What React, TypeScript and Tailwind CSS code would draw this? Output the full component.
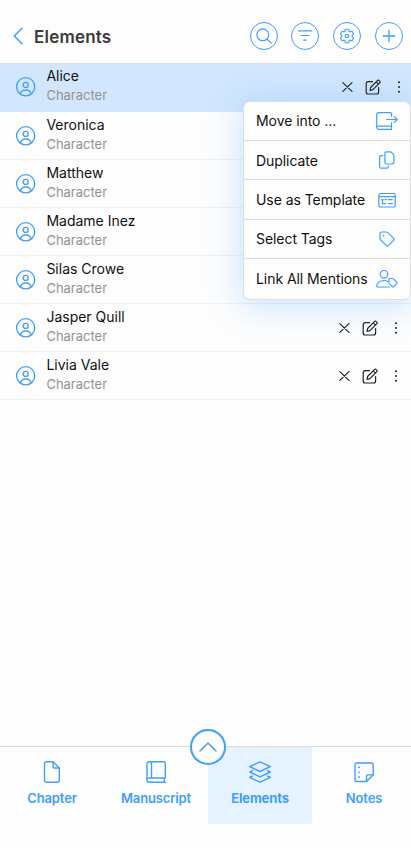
import React from 'react';

interface IconProps {
  className?: string;
  children: React.ReactNode;
  viewBox: string;
  strokeWidth?: number;
}

interface ElementItem {
  id: number;
  name: string;
  type: string;
}

const elements: ElementItem[] = [
  { id: 1, name: 'Alice', type: 'Character' },
  { id: 2, name: 'Veronica', type: 'Character' },
  { id: 3, name: 'Matthew', type: 'Character' },
  { id: 4, name: 'Madame Inez', type: 'Character' },
  { id: 5, name: 'Silas Crowe', type: 'Character' },
  { id: 6, name: 'Jasper Quill', type: 'Character' },
  { id: 7, name: 'Livia Vale', type: 'Character' },
];

function Icon({ className = '', children, viewBox, strokeWidth = 1.2 }: IconProps) {
  return (
    <svg
      className={`shrink-0 ${className}`}
      viewBox={viewBox}
      fill="none"
      stroke="currentColor"
      strokeWidth={strokeWidth}
      strokeLinecap="round"
      strokeLinejoin="round"
    >
      {children}
    </svg>
  );
}

const UserIcon = () => (
  <Icon viewBox="0 0 20 20" className="h-5 w-5" strokeWidth={1.3}>
    <circle cx="9.7" cy="9.8" r="9.1" />
    <circle cx="9.7" cy="7.9" r="2.5" />
    <path d="M4.3 17c.5-2.500 2.500-4 5.400-4s4.900 1.500 5.400 4" />
  </Icon>
);

const SearchIcon = () => (
  <Icon viewBox="0 0 16 16" className="h-4 w-4">
    <circle cx="6.8" cy="6.8" r="5.9" />
    <path d="M11 11l4.2 4.2" />
  </Icon>
);

const FilterIcon = () => (
  <Icon viewBox="0 0 16 16" className="h-4 w-4">
    <path d="M1.500 2.800h13M4 7.500h8M6.800 12.200h2.400" />
  </Icon>
);

const GearIcon = () => (
  <Icon viewBox="0 0 24 24" className="h-[18px] w-[18px]" strokeWidth={1.6}>
    <path d="M9.594 3.940c.090-.542.560-.940 1.110-.940h2.593c.550 0 1.020.398 1.110.940l.213 1.281c.063.374.313.686.645.870.074.040.147.083.220.127.325.196.720.257 1.075.124l1.217-.456a1.125 1.125 0 0 1 1.370.490l1.296 2.247a1.125 1.125 0 0 1-.260 1.431l-1.003.827c-.293.241-.438.613-.430.992a7.723 7.723 0 0 1 0 .255c-.008.378.137.750.430.991l1.004.827c.424.350.534.955.260 1.430l-1.298 2.247a1.125 1.125 0 0 1-1.369.491l-1.217-.456c-.355-.133-.750-.072-1.076.124a6.470 6.470 0 0 1-.220.128c-.331.183-.581.495-.644.869l-.213 1.281c-.090.543-.560.940-1.110.940h-2.594c-.550 0-1.019-.398-1.110-.940l-.213-1.281c-.062-.374-.312-.686-.644-.870a6.520 6.520 0 0 1-.220-.127c-.325-.196-.720-.257-1.076-.124l-1.217.456a1.125 1.125 0 0 1-1.369-.490l-1.297-2.247a1.125 1.125 0 0 1 .260-1.431l1.004-.827c.292-.240.437-.613.430-.991a6.932 6.932 0 0 1 0-.255c.007-.380-.138-.751-.430-.992l-1.004-.827a1.125 1.125 0 0 1-.260-1.430l1.297-2.247a1.125 1.125 0 0 1 1.370-.491l1.216.456c.356.133.751.072 1.076-.124.072-.044.146-.086.220-.128.332-.183.582-.495.644-.869l.214-1.280Z" />
    <circle cx="12" cy="12" r="2.3" />
  </Icon>
);

const PlusIcon = () => (
  <Icon viewBox="0 0 16 16" className="h-4 w-4" strokeWidth={1.3}>
    <path d="M8 2.200v11.600M2.200 8h11.600" />
  </Icon>
);

const MoveIcon = () => (
  <Icon viewBox="0 0 22 18" className="h-[18px] w-[22px]">
    <path d="M15.500 4.300V1.700a1 1 0 0 0-1-1H2.700a2 2 0 0 0-2 2v12.900M15.500 10.700v3.500H2.400a1.550 1.550 0 0 0 0 3.100h13.100v-3" />
    <path d="M10.500 7.500h10.800M18.300 4.600l3 2.900-3 2.900" />
  </Icon>
);

const DuplicateIcon = () => (
  <Icon viewBox="0 0 18 18" className="mr-[2px] h-[18px] w-[18px]">
    <path d="M8.700.8h4.200l3 3v7.400a1.800 1.800 0 0 1-1.800 1.800H8.700a1.800 1.800 0 0 1-1.800-1.800V2.600A1.800 1.800 0 0 1 8.700.8Z" />
    <path d="M4.700 4.700H3.400a1.800 1.800 0 0 0-1.800 1.800v8.900a1.800 1.800 0 0 0 1.800 1.800h5.200a1.800 1.800 0 0 0 1.800-1.800V15" />
  </Icon>
);

const TemplateIcon = () => (
  <Icon viewBox="0 0 18 16" className="mr-[2px] h-4 w-[18px]">
    <rect x=".8" y="1.500" width="16.400" height="13.500" rx="1.600" />
    <path d="M1 4.700h16M3.700 7.700h1.500M4.500 7.700v4M7 7.700h1.500M4.500 11.700h3M10.500 7.700h3.800M10.500 11.700h3.800" />
  </Icon>
);

const TagIcon = () => (
  <Icon viewBox="0 0 16 16" className="mr-[3px] h-4 w-4">
    <path d="M1 2.700A1.700 1.700 0 0 1 2.700 1h4.700a2 2 0 0 1 1.400.6l5.600 5.600a1.700 1.700 0 0 1 0 2.400l-4.800 4.800a1.700 1.700 0 0 1-2.400 0L1.600 8.800A2 2 0 0 1 1 7.400Z" />
    <circle cx="4.500" cy="4.500" r=".3" />
  </Icon>
);

const MentionIcon = () => (
  <Icon viewBox="0 0 22 18" className="h-[18px] w-[22px]">
    <circle cx="8" cy="4.300" r="3.800" />
    <path d="M11.500 11.400C10.500 10.800 9.300 10.500 8 10.500c-4 0-7.300 2.500-7.300 5.500 0 .7.400 1 1 1h11.600" />
    <path d="M12.800 9.500a1 1 0 0 1 1-1h2.700c.4 0 .7.100 1 .4l3.200 3.200a1 1 0 0 1 0 1.500l-3 3a1 1 0 0 1-1.500 0l-3-3a1.500 1.500 0 0 1-.4-1Z" />
  </Icon>
);

const ChapterIcon = () => (
  <Icon viewBox="0 0 22 22" className="h-[22px] w-[22px]" strokeWidth={1.4}>
    <path d="M5.200.8h6.900l6.200 6.200v12.500a1.700 1.700 0 0 1-1.700 1.700H5.200a1.700 1.700 0 0 1-1.700-1.700v-17A1.700 1.700 0 0 1 5.200.8Z" />
    <path d="M12.100 1v4.800A1.200 1.200 0 0 0 13.300 7h4.800" />
  </Icon>
);

const ManuscriptIcon = () => (
  <Icon viewBox="0 0 22 22" className="h-[22px] w-[22px]" strokeWidth={1.4}>
    <path d="M20.300 17V2.300A1.500 1.500 0 0 0 18.800.8H4a2 2 0 0 0-2 2V19M6.500 1v16M20.300 17H4.100a2.100 2.100 0 0 0 0 4.200h16.200M19.300 17.200v3.800" />
  </Icon>
);

const LayersIcon = () => (
  <Icon viewBox="0 0 22 22" className="h-[22px] w-[22px]" strokeWidth={1.4}>
    <path d="M11 .8l10.300 4.900L11 10.500.700 5.700Z" />
    <path d="M3.500 9.600L.700 11 11 15.800l10.300-4.800-2.800-1.400" />
    <path d="M3.500 15L.700 16.400 11 21.200l10.300-4.800L18.500 15" />
  </Icon>
);

const NotesIcon = () => (
  <Icon viewBox="0 0 22 22" className="h-[22px] w-[22px]" strokeWidth={1.4}>
    <path d="M13.500 20.500H3.800A1.800 1.800 0 0 1 2 18.700V3.800A1.800 1.800 0 0 1 3.800 2h14.600a1.800 1.800 0 0 1 1.800 1.800v10Z" />
    <path d="M13.500 20.300v-5.100a1.300 1.300 0 0 1 1.300-1.300H20" />
    <path d="M5.800 6.400h.5M5.800 11.300h.5M5.800 16.100h.5" strokeWidth="1.600" />
  </Icon>
);

const menuItems = [
  { label: 'Move into ...', icon: <MoveIcon /> },
  { label: 'Duplicate', icon: <DuplicateIcon /> },
  { label: 'Use as Template', icon: <TemplateIcon /> },
  { label: 'Select Tags', icon: <TagIcon /> },
  { label: 'Link All Mentions', icon: <MentionIcon /> },
];

const tabs = [
  { label: 'Chapter', icon: <ChapterIcon /> },
  { label: 'Manuscript', icon: <ManuscriptIcon /> },
  { label: 'Elements', icon: <LayersIcon /> },
  { label: 'Notes', icon: <NotesIcon /> },
];

const headerActions = [
  { label: 'Search', icon: <SearchIcon /> },
  { label: 'Filter', icon: <FilterIcon /> },
  { label: 'Settings', icon: <GearIcon /> },
  { label: 'Add', icon: <PlusIcon /> },
];

function RowActions() {
  return (
    <div className="flex items-center text-[#222]">
      <button aria-label="Remove" className="mr-[12px]">
        <Icon viewBox="0 0 11 10" className="h-[10px] w-[11px]" strokeWidth={1.2}>
          <path d="M.800.600l9.200 8.800M10 .600L.800 9.400" />
        </Icon>
      </button>
      <button aria-label="Edit" className="mr-[15px]">
        <Icon viewBox="0 0 16 16" className="h-4 w-4" strokeWidth={1.2}>
          <path d="M7.500 2.700H3.200A2 2 0 0 0 1.200 4.700v8.300a2 2 0 0 0 2 2h8.400a2 2 0 0 0 2-2V8.600" />
          <path d="M5.600 8.500l6.800-6.900a1.300 1.300 0 0 1 1.900 0l.4.400a1.300 1.300 0 0 1 0 1.900l-6.800 6.800-2.800.8ZM11.200 2.800l2.300 2.300" />
        </Icon>
      </button>
      <button aria-label="More">
        <svg className="h-[14px] w-[6px]" viewBox="0 0 6 14" fill="currentColor">
          <circle cx="3" cy="2.200" r="1" />
          <circle cx="3" cy="7" r="1" />
          <circle cx="3" cy="11.800" r="1" />
        </svg>
      </button>
    </div>
  );
}

function ContextMenu() {
  return (
    <div className="absolute right-0 top-[36.600px] z-10 w-[168.400px] divide-y divide-[#dcdcdc] rounded-[7px] border border-[#dedede] bg-[#fdfdfd] shadow-[0_4px_36px_rgba(64,158,255,0.32)]">
      {menuItems.map((item) => (
        <button
          key={item.label}
          className="flex h-[39.400px] w-full items-center justify-between pl-[12.400px] pr-[12px] text-left text-[14px] tracking-[-0.06px] text-[#111]"
        >
          <span className="whitespace-nowrap">{item.label}</span>
          <span className="text-[#409eff]">{item.icon}</span>
        </button>
      ))}
    </div>
  );
}

export default function App() {
  const selectedId = 1;
  const activeTab = 'Elements';

  return (
    <div className="flex h-[848px] w-full flex-col overflow-hidden bg-[#fdfdfd] font-['Inter',sans-serif]">
      <header className="flex h-16 shrink-0 items-center border-b border-[#dcdfe3] pl-[13px] pr-[8.500px] pt-[9px]">
        <button aria-label="Back" className="text-[#409eff]">
          <Icon viewBox="0 0 10 18" className="h-[18px] w-[10px]" strokeWidth={1.5}>
            <path d="M9 1.300L1.300 9 9 16.700" />
          </Icon>
        </button>
        <h1 className="ml-[11px] pt-[3px] text-[17px] font-semibold tracking-[0.2px] text-[#3a3a3a]">Elements</h1>
        <div className="ml-auto flex gap-[13.600px]">
          {headerActions.map((action) => (
            <button
              key={action.label}
              aria-label={action.label}
              className="flex h-7 w-7 items-center justify-center rounded-full border border-[#409eff] text-[#409eff]"
            >
              {action.icon}
            </button>
          ))}
        </div>
      </header>

      <main className="relative flex-1">
        <ul>
          {elements.map((element) => {
            const selected = element.id === selectedId;
            return (
              <li
                key={element.id}
                className={`flex h-12 items-center border-b pl-4 ${
                  selected ? 'border-[#d2e7fd] bg-[#d2e7fd] pb-px pr-[9px]' : 'border-[#eff1f4] pr-3'
                }`}
              >
                <span className="text-[#409eff]">
                  <UserIcon />
                </span>
                <div className="ml-[10.400px] flex-1 pb-[3px]">
                  <p className="text-[14px] leading-5 text-[#111]">{element.name}</p>
                  <p className="text-[13px] leading-[19px] text-[#929292]">{element.type}</p>
                </div>
                <RowActions />
              </li>
            );
          })}
        </ul>
        <ContextMenu />
      </main>

      <nav className="relative h-[102px] w-[416px] shrink-0 border-t border-[#dcdcdc]">
        <div className="grid h-[77px] grid-cols-4">
          {tabs.map((tab) => (
            <button
              key={tab.label}
              className={`flex flex-col items-center pt-[14px] text-[#409eff] ${
                tab.label === activeTab ? 'bg-[#e6f3ff]' : ''
              }`}
            >
              {tab.icon}
              <span
                className={`mt-[6px] text-[13px] leading-[18px] ${
                  tab.label === activeTab ? 'font-bold tracking-[-0.15px]' : 'font-semibold tracking-[-0.15px]'
                }`}
              >
                {tab.label}
              </span>
            </button>
          ))}
        </div>
        <button
          aria-label="Expand"
          className="absolute left-[190px] top-[-18px] flex h-9 w-9 items-center justify-center rounded-full border-2 border-[#409eff] bg-[#fdfdfd] text-[#409eff]"
        >
          <Icon viewBox="0 0 18 10" className="h-[10px] w-[18px]" strokeWidth={1.5}>
            <path d="M1 9l8-8 8 8" />
          </Icon>
        </button>
      </nav>
    </div>
  );
}
